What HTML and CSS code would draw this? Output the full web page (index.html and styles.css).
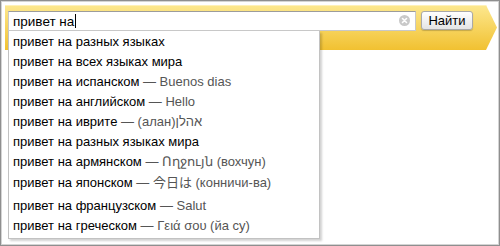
FILE: index.html
```html
<!DOCTYPE html>
<html lang="ru">

<head>
  <meta charset="UTF-8">
  <title>Поиск</title>
  <link rel="stylesheet" href="styles.css">
</head>

<body>
  <div class="frame">
    <!-- Search arrow bar -->
    <div class="search-bar">
      <div class="search-input">
        <span class="search-text">привет на</span><span class="caret"></span>
        <span class="clear-btn">
          <svg width="11" height="11" viewBox="0 0 11 11">
            <circle cx="5.5" cy="5.5" r="5.5" fill="#c9c9c9" />
            <path d="M3.5 3.5 L7.5 7.5 M7.5 3.5 L3.5 7.5" stroke="#fff" stroke-width="1.6" stroke-linecap="round" />
          </svg>
        </span>
      </div>
      <button class="search-btn">Найти</button>
    </div>

    <!-- Suggest dropdown -->
    <ul class="suggest">
      <li class="suggest-item">привет на разных языках</li>
      <li class="suggest-item">привет на всех языках мира</li>
      <li class="suggest-item">привет на испанском <span class="hint">— Buenos dias</span></li>
      <li class="suggest-item">привет на английском <span class="hint">— Hello</span></li>
      <li class="suggest-item">привет на иврите <span class="hint">— (алан)<bdi>אהלן</bdi></span></li>
      <li class="suggest-item">привет на разных языках мира</li>
      <li class="suggest-item">привет на армянском <span class="hint">— Ողջույն (вохчун)</span></li>
      <li class="suggest-item suggest-item-tall">привет на японском <span class="hint">— 今日は (конничи-ва)</span></li>
      <li class="suggest-item">привет на французском <span class="hint">— Salut</span></li>
      <li class="suggest-item">привет на греческом <span class="hint">— Γειά σου (йа су)</span></li>
    </ul>
  </div>
</body>

</html>
```

FILE: styles.css
```css
body {
  margin: 0;
  font-family: "Liberation Sans", Arial, "Noto Sans CJK JP", sans-serif;
  font-size: 13px;
  color: #000;
  background-color: #fff;
}

.frame {
  position: relative;
  width: 500px;
  height: 246px;
  box-sizing: border-box;
  border: 1px solid #8f8f8f;
  box-shadow: inset 0 0 0 1px #d4d4d4;
  padding: 4px 2px 0 4px;
}

.search-bar {
  display: flex;
  align-items: flex-start;
  gap: 5px;
  width: 492px;
  height: 45px;
  box-sizing: border-box;
  padding: 6px 0 0 3px;
  background: linear-gradient(#fde88f, #f1c131);
  box-shadow: inset 0 1px 0 #fff1b8;
  clip-path: polygon(0 0, calc(100% - 11px) 0, 100% 50%, calc(100% - 11px) 100%, 0 100%);
}

.search-input {
  position: relative;
  display: flex;
  align-items: center;
  width: 408px;
  height: 20px;
  box-sizing: border-box;
  padding-left: 4px;
  background-color: #fff;
  border: 1px solid #c8c8c8;
  border-top-color: #9c9c9c;
  font-size: 13.5px;
}

.caret {
  width: 1px;
  height: 14px;
  margin-left: 1px;
  background-color: #000;
}

.clear-btn {
  position: absolute;
  right: 5px;
  top: 3px;
  display: flex;
}

.search-btn {
  width: 52px;
  height: 19px;
  padding: 0;
  font-family: inherit;
  font-size: 13px;
  color: #000;
  background: linear-gradient(#ffffff, #e4e4e4);
  border: 1px solid #a9a9a9;
  border-radius: 3px;
  box-shadow: 0 1px 1px rgba(0, 0, 0, 0.2);
}

.suggest {
  position: absolute;
  left: 7px;
  top: 30px;
  width: 312px;
  margin: 0;
  padding: 1px 0 2px;
  box-sizing: border-box;
  list-style: none;
  background-color: #fff;
  border: 1px solid #c2c2c2;
  border-top: none;
  box-shadow: 2px 2px 2px rgba(0, 0, 0, 0.18);
}

.suggest-item {
  height: 20px;
  line-height: 20px;
  padding-left: 4px;
  white-space: nowrap;
}

.suggest-item-tall {
  height: 24px;
  line-height: 21px;
}

.hint {
  color: #555;
}
```
